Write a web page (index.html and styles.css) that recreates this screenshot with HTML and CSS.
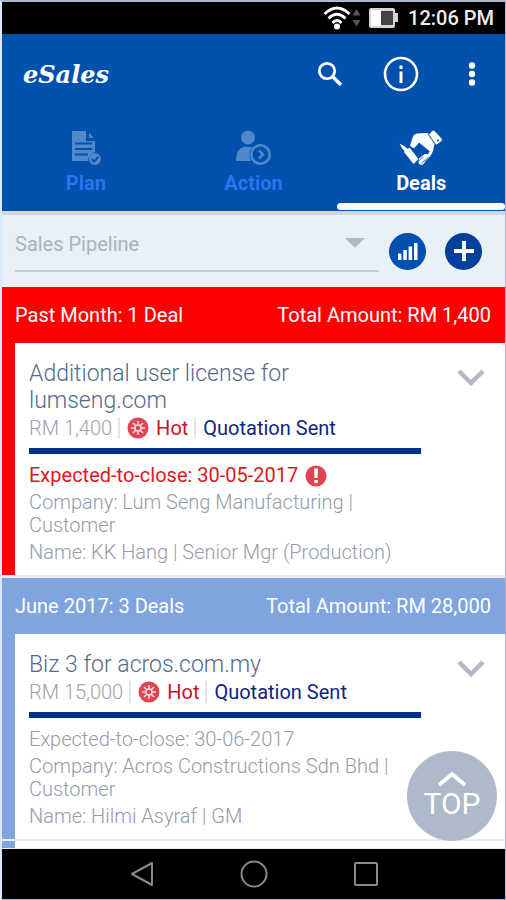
FILE: index.html
```html
<!DOCTYPE html>
<html lang="en">
<head>
<meta charset="utf-8">
<meta name="viewport" content="width=device-width, initial-scale=1">
<title>eSales</title>
<link rel="stylesheet" href="styles.css">
</head>
<body>
<div class="screen">
  <div class="status">
    <svg width="38" height="24" viewBox="0 0 38 24" aria-hidden="true">
      <g fill="none" stroke="#fff" stroke-width="2.800"><path d="M1.500 8Q14 -4 26.500 8M5.500 12.500Q14 4 22.500 12.500M9.500 17Q14 12 18.500 17"/></g>
      <circle cx="14" cy="20.500" r="3" fill="#fff"/>
      <path d="M29.500 9.500L33.500 3L37.500 9.500zM29.500 14L33.500 20.500L37.500 14z" fill="#555"/>
    </svg>
    <svg width="29" height="20" viewBox="0 0 29 20" aria-hidden="true">
      <path d="M2 0H24Q26 0 26 2V5H29V14H26V18Q26 20 24 20H2Q0 20 0 18V2Q0 0 2 0z" fill="#d5d5d5"/>
      <path d="M2 2H12V18H2z" fill="#fff"/><path d="M12 3H24V17H12z" fill="#444"/>
    </svg>
    <time class="clock">12:06 PM</time>
  </div>

  <header class="appbar">
    <h1 class="brand">eSales</h1>
    <button class="icon-btn" type="button" aria-label="Search">
      <svg width="26" height="26" viewBox="0 0 26 26"><g fill="none" stroke="#fff"><circle cx="10" cy="10" r="7.700" stroke-width="2.800"/><path d="M15.500 15.500L24 24" stroke-width="3.600"/></g></svg>
    </button>
    <button class="icon-btn" type="button" aria-label="Information">
      <svg width="36" height="36" viewBox="0 0 36 36"><circle cx="18" cy="18" r="16" fill="none" stroke="#fff" stroke-width="2.600"/><path d="M16.500 9.500h3v3.600h-3zM16.500 15.500h3v11.500h-3z" fill="#fff"/></svg>
    </button>
    <button class="icon-btn" type="button" aria-label="More options">
      <svg width="8" height="24" viewBox="0 0 8 24" fill="#fff"><circle cx="4" cy="3.500" r="3.200"/><circle cx="4" cy="12" r="3.200"/><circle cx="4" cy="20.500" r="3.200"/></svg>
    </button>
  </header>

  <nav class="tabs">
    <a class="tab" href="#plan">
      <svg width="30" height="36" viewBox="0 0 30 36" aria-hidden="true">
        <path d="M1 1H15V11H24V22Q18 24 17 31H1z" fill="#5088cb"/><path d="M18 2.500L22.500 8H18z" fill="#5088cb"/>
        <path d="M4 13.500H21M4 19H21M4 24.500H17" stroke="#0050ae" stroke-width="2"/>
        <circle cx="24" cy="29" r="6" fill="#5088cb"/><path d="M20.800 29L23.300 31.500L27.500 26.700" fill="none" stroke="#0050ae" stroke-width="1.800"/>
      </svg>
      <span>Plan</span>
    </a>
    <a class="tab" href="#action">
      <svg width="36" height="36" viewBox="0 0 36 36" aria-hidden="true">
        <circle cx="13" cy="7.500" r="7" fill="#5088cb"/><path d="M1 31Q1 17.500 11 16.500Q14 18 18 16.500Q15 19 14.500 24Q14.500 28 16 31z" fill="#5088cb"/>
        <circle cx="25.500" cy="24.500" r="9.200" fill="#0050ae" stroke="#5088cb" stroke-width="2.600"/><path d="M24 20.500L28 24.500L24 28.500" fill="none" stroke="#5088cb" stroke-width="2.500"/>
      </svg>
      <span>Action</span>
    </a>
    <a class="tab active" href="#deals" aria-current="page">
      <svg width="44" height="36" viewBox="0 0 44 36" aria-hidden="true">
        <path d="M11 15.500L14 6.500Q15 4 18 3.500L28.500 3L36 12L34 21L32 25L31 21.500L20 12.500L16 17.500Q13 19 11 15.500z" fill="#fff"/>
        <path d="M31 21L34 17.500L32 25L24 34.500Q21 36 19.500 33L20 28.500L23 26L26 24L29 24z" fill="#fff"/>
        <path d="M29.500 4.500L33 0.500Q34.500 -0.500 36 1L43 8.500Q44 10 42.500 11.500L38.500 14.500Q37 15.500 36 14z" fill="#fff" stroke="#0050ae"/>
        <path d="M5 22L10.500 17.500L19.500 29L14.500 34z" fill="#fff"/>
        <path d="M0.500 13.500L5 16L9.500 19.500L6.500 22.500L3 18z" fill="#fff"/>
        <path d="M22 34.500L26 29.500M20 31L24 26.500M25.500 32L29 27" stroke="#0050ae" stroke-width="0.700"/>
        <circle cx="39" cy="10.500" r="1" fill="#0050ae"/>
      </svg>
      <span>Deals</span>
    </a>
  </nav>

  <form class="filter">
    <div class="picker">
      <select aria-label="Deal view"><option>Sales Pipeline</option></select>
      <svg class="caret" width="20" height="10" viewBox="0 0 20 10" aria-hidden="true"><path d="M0 0H20L10 10z" fill="#aeb9c4"/></svg>
    </div>
    <button class="round" type="button" aria-label="Chart">
      <svg width="20" height="18" viewBox="0 0 20 18" fill="#fff"><path d="M0 11.500h3.500V18H0zM5.300 8h3.500v10H5.300zM10.600 4.500h3.500V18h-3.500zM16 1h3.500v17H16z"/></svg>
    </button>
    <button class="round add" type="button" aria-label="Add deal">
      <svg width="20" height="20" viewBox="0 0 20 20"><path d="M10 0V20M0 10H20" stroke="#fff" stroke-width="4"/></svg>
    </button>
  </form>

  <main class="deals">
    <section class="group overdue">
      <h2 class="group-head"><span>Past Month: 1 Deal</span><span>Total Amount: RM 1,400</span></h2>
      <article class="card">
        <div class="info">
          <h3 class="title">Additional user license for lumseng.com</h3>
          <div class="meta">
            <span class="amount">RM 1,400</span>
            <span class="hot"><svg width="22" height="22" viewBox="0 0 22 22" aria-hidden="true"><circle cx="11" cy="11" r="10.500" fill="#e04451"/><path d="M11 4V18M4 11H18M6 6L16 16M16 6L6 16" stroke="#ffdadd" stroke-width="1.500"/><circle cx="11" cy="11" r="3" fill="#e04451" stroke="#ffdadd" stroke-width="1.500"/></svg>Hot</span>
            <span class="stage">Quotation Sent</span>
          </div>
          <div class="bar"></div>
          <p class="line due">Expected-to-close: 30-05-2017 <svg width="22" height="22" viewBox="0 0 22 22" aria-hidden="true"><circle cx="11" cy="11" r="10.500" fill="#e04451"/><path d="M9 3.500h4l-.5 9.500h-3zM9.300 15h3.400v3.200h-3.400z" fill="#fff"/></svg></p>
          <p class="line">Company: Lum Seng Manufacturing | Customer</p>
          <p class="line">Name: KK Hang | Senior Mgr (Production)</p>
        </div>
        <button class="expand" type="button" aria-label="Expand deal"><svg width="28" height="18" viewBox="0 0 28 18"><path d="M2 2L14 14L26 2" fill="none" stroke="#b4b9c8" stroke-width="4.500"/></svg></button>
      </article>
    </section>

    <section class="group">
      <h2 class="group-head"><span>June 2017: 3 Deals</span><span>Total Amount: RM 28,000</span></h2>
      <article class="card">
        <div class="info">
          <h3 class="title">Biz 3 for acros.com.my</h3>
          <div class="meta">
            <span class="amount">RM 15,000</span>
            <span class="hot"><svg width="22" height="22" viewBox="0 0 22 22" aria-hidden="true"><circle cx="11" cy="11" r="10.500" fill="#e04451"/><path d="M11 4V18M4 11H18M6 6L16 16M16 6L6 16" stroke="#ffdadd" stroke-width="1.500"/><circle cx="11" cy="11" r="3" fill="#e04451" stroke="#ffdadd" stroke-width="1.500"/></svg>Hot</span>
            <span class="stage">Quotation Sent</span>
          </div>
          <div class="bar"></div>
          <p class="line">Expected-to-close: 30-06-2017</p>
          <p class="line">Company: Acros Constructions Sdn Bhd | Customer</p>
          <p class="line">Name: Hilmi Asyraf | GM</p>
        </div>
        <button class="expand" type="button" aria-label="Expand deal"><svg width="28" height="18" viewBox="0 0 28 18"><path d="M2 2L14 14L26 2" fill="none" stroke="#b4b9c8" stroke-width="4.500"/></svg></button>
      </article>
    </section>
    <div class="group next"></div>
    <button class="top" type="button">
      <svg width="30" height="16" viewBox="0 0 30 16" aria-hidden="true"><path d="M2 14L15 3L28 14" fill="none" stroke="#fff" stroke-width="4"/></svg>
      <span>TOP</span>
    </button>
  </main>

  <footer class="system">
    <button type="button" aria-label="Back"><svg width="24" height="26" viewBox="0 0 24 26"><path d="M22 2V24L2 13z" fill="none" stroke="#898989" stroke-width="2" stroke-linejoin="round"/></svg></button>
    <button type="button" aria-label="Home"><svg width="28" height="28" viewBox="0 0 28 28"><circle cx="14" cy="14" r="12.500" fill="none" stroke="#898989" stroke-width="2"/></svg></button>
    <button type="button" aria-label="Recent apps"><svg width="24" height="24" viewBox="0 0 24 24"><rect x="1" y="1" width="22" height="22" rx="1" fill="none" stroke="#898989" stroke-width="2"/></svg></button>
  </footer>
</div>
</body>
</html>
```
FILE: styles.css
```css
* {
  box-sizing: border-box;
}

body {
  margin: 0;
  font-family: Roboto, "Liberation Sans", sans-serif;
  font-size: 20px;
  background: #dbeafa;
}

h1, h2, h3, p {
  margin: 0;
  font-weight: 400;
}

svg {
  display: block;
  flex: none;
}

button {
  display: flex;
  align-items: center;
  justify-content: center;
  padding: 0;
  border: 0;
  background: none;
  color: #fff;
  font: inherit;
}

.screen {
  display: flex;
  flex-direction: column;
  min-height: 100vh;
  border: 1px solid #a9b8ca;
  border-width: 2px 1px 1px 2px;
  border-left-color: #dbeafa;
}

.status {
  display: flex;
  align-items: center;
  justify-content: flex-end;
  gap: 8px;
  height: 32px;
  padding-right: 11px;
  background: #000;
}

.clock {
  margin-left: 2px;
  color: #eee;
  font-weight: 500;
  line-height: 32px;
}

.appbar {
  display: flex;
  align-items: center;
  height: 80px;
  padding: 0 15px 0 21px;
  background: #0050ae;
}

.brand {
  flex: 1;
  color: #fff;
  font-family: "DejaVu Serif", "Liberation Serif", serif;
  font-size: 24px;
  font-style: italic;
  font-weight: 700;
}

.icon-btn {
  width: 36px;
  height: 48px;
  margin-left: 35px;
}

.tabs {
  display: grid;
  grid-template-columns: repeat(3, 1fr);
  height: 97px;
  background: #0050ae;
}

.tab {
  display: flex;
  flex-direction: column;
  align-items: center;
  gap: 4px;
  padding-top: 16px;
  color: #2a74ee;
  font-weight: 700;
  line-height: 26px;
  text-decoration: none;
}

.tab.active {
  color: #fff;
}

.tab.active::after {
  content: "";
  width: 100%;
  height: 7px;
  margin-top: 3px;
  border-radius: 4px;
  background: #fff;
}

.filter {
  display: flex;
  align-items: center;
  gap: 19px;
  height: 76px;
  padding: 0 23px 0 13px;
  border-top: 4px solid #d3d7df;
  background: #e8f0f8;
}

.picker {
  position: relative;
  flex: 1;
  height: 42px;
  margin-right: -9px;
  border-bottom: 2px solid #c1c9d3;
}

.picker select {
  display: block;
  width: 100%;
  height: 28px;
  padding: 0;
  border: 0;
  background: none;
  color: #aab2bd;
  font: inherit;
  appearance: none;
}

.caret {
  position: absolute;
  top: 8px;
  right: 14px;
  pointer-events: none;
}

.round {
  width: 37px;
  height: 37px;
  border-radius: 50%;
  background: #0050ae;
}

.round.add {
  background: #043f9c;
}

.deals {
  position: relative;
  flex: 1;
  background: #e8edf7;
}

.group {
  border-left: 13px solid #80a4de;
}

.group-head {
  display: flex;
  align-items: center;
  justify-content: space-between;
  height: 56px;
  padding-right: 14px;
  background: #80a4de;
  color: #fff;
  font-size: 20px;
}

.overdue {
  margin-bottom: 3px;
  border-color: #f00;
}

.overdue .group-head {
  background: #f00;
}

.card {
  display: flex;
  align-items: flex-start;
  justify-content: space-between;
  padding: 17px 20px 11px 14px;
  background: #fff;
}

.info {
  flex: 1;
  max-width: 392px;
  font-weight: 300;
}

.title {
  color: #576a88;
  font-size: 23px;
  font-weight: 300;
  line-height: 27px;
}

.meta {
  display: flex;
  align-items: center;
  height: 28px;
  line-height: 22px;
}

.amount {
  color: #9ba0ae;
}

.hot, .stage {
  display: flex;
  gap: 7px;
  margin-left: 6px;
  padding-left: 7px;
  border-left: 2px solid #e3e5ea;
  font-weight: 400;
}

.hot {
  color: #cb1420;
}

.stage {
  color: #10247f;
}

.bar {
  height: 6px;
  margin: 6px 0 10px;
  background: #002f89;
}

.line {
  margin-bottom: 4px;
  color: #959ba9;
  font-weight: 300;
  line-height: 23px;
}

.line:last-child {
  margin-bottom: 0;
}

.due {
  display: flex;
  align-items: center;
  gap: 7px;
  color: #e01820;
  font-weight: 400;
}

.expand {
  width: 28px;
  height: 36px;
}

.next {
  height: 7px;
  margin-top: 2px;
  background: #fff;
}

.top {
  position: absolute;
  right: 8px;
  bottom: 8px;
  flex-direction: column;
  width: 90px;
  height: 90px;
  border-radius: 50%;
  background: #aeb9ca;
  font-size: 30px;
  line-height: 34px;
}

.system {
  display: flex;
  align-items: center;
  justify-content: center;
  gap: 86px;
  height: 50px;
  background: #000;
}
```
